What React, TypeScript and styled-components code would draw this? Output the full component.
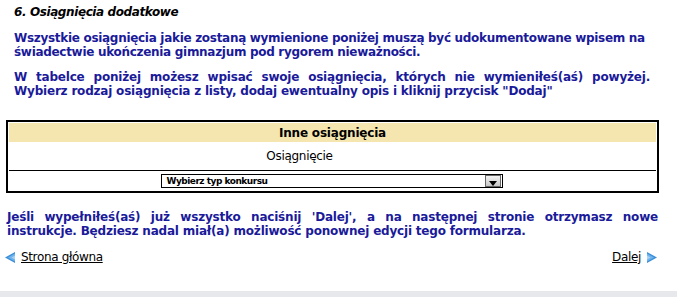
import React from 'react';
import styled, { createGlobalStyle } from 'styled-components';

const GlobalStyle = createGlobalStyle`
  html, body {
    margin: 0;
    padding: 0;
    background: #ffffff;
  }
  body {
    font-family: "DejaVu Sans", Verdana, sans-serif;
    font-size: 12px;
  }
`;

const App = () => {
  return (
    <Page>
      <GlobalStyle />
      <Intro>
        <Heading>6. Osiągnięcia dodatkowe</Heading>
        <Note>
          Wszystkie osiągnięcia jakie zostaną wymienione poniżej muszą być udokumentowane wpisem na
          świadectwie ukończenia gimnazjum pod rygorem nieważności.
        </Note>
        <Note justify>
          W tabelce poniżej możesz wpisać swoje osiągnięcia, których nie wymieniłeś(aś) powyżej.
          Wybierz rodzaj osiągnięcia z listy, dodaj ewentualny opis i kliknij przycisk "Dodaj"
        </Note>
      </Intro>

      <Box>
        <HeaderRow>Inne osiągnięcia</HeaderRow>
        <LabelRow>Osiągnięcie</LabelRow>
        <SelectRow>
          <FakeSelect>
            <SelectText>Wybierz typ konkursu</SelectText>
            <DropButton>
              <svg width="8" height="5" viewBox="0 0 8 5">
                <path d="M0 0 H8 L4 5 Z" fill="#000" />
              </svg>
            </DropButton>
          </FakeSelect>
        </SelectRow>
      </Box>

      <Outro>
        Jeśli wypełniłeś(aś) już wszystko naciśnij 'Dalej', a na następnej stronie otrzymasz nowe
        instrukcje. Będziesz nadal miał(a) możliwość ponownej edycji tego formularza.
      </Outro>

      <NavRow>
        <NavLink>
          <Arrow dir="left" />
          <LinkText>Strona główna</LinkText>
        </NavLink>
        <NavLink>
          <LinkText>Dalej</LinkText>
          <Arrow dir="right" />
        </NavLink>
      </NavRow>

      <FootStrip />
    </Page>
  );
};

interface ArrowProps {
  dir: 'left' | 'right';
}
const Arrow = (props: ArrowProps) => {
  const flip = props.dir === 'right' ? 'translate(10 0) scale(-1 1)' : undefined;
  return (
    <svg width="10" height="11" viewBox="0 0 10 11">
      <g transform={flip}>
        <path d="M10 0 L0 5.5 L10 11 Z" fill="#3d8fd8" />
        <path d="M10 1.5 L3 5.5 L10 9.5 Z" fill="#6fb3ec" />
        <path d="M10 3.5 L6.5 5.5 L10 7.5 Z" fill="#a9d3f5" />
      </g>
    </svg>
  );
};

const Page = styled.div`
  width: 677px;
  height: 297px;
  display: flex;
  flex-direction: column;
  overflow: hidden;
`;

const Intro = styled.div`
  width: 636px;
  padding: 5px 0 0 14px;
  display: flex;
  flex-direction: column;
  gap: 11px;
`;

const Heading = styled.div`
  font-weight: bold;
  font-style: italic;
  color: #000;
  line-height: 14px;
  letter-spacing: -0.4px;
  margin-bottom: 1px;
`;

const Note = styled.div<{ justify?: boolean }>`
  font-weight: bold;
  color: #1a1a9a;
  line-height: 14px;
  letter-spacing: ${(p) => (p.justify ? '-0.2px' : '-0.3px')};
  text-align: ${(p) => (p.justify ? 'justify' : 'left')};
`;

const Box = styled.div`
  margin: 22px 0 0 6px;
  width: 647px;
  border: 2px solid #000;
  padding: 1px;
  display: flex;
  flex-direction: column;
`;

const HeaderRow = styled.div`
  height: 19px;
  background: #f5e6b0;
  display: flex;
  align-items: center;
  justify-content: center;
  font-weight: bold;
  letter-spacing: -0.2px;
  color: #000;
`;

const LabelRow = styled.div`
  height: 28px;
  padding-right: 66px;
  border-bottom: 1px solid #000;
  display: flex;
  align-items: center;
  justify-content: center;
  letter-spacing: -0.3px;
  color: #000;
`;

const SelectRow = styled.div`
  height: 19px;
  display: flex;
  align-items: center;
  justify-content: center;
`;

const FakeSelect = styled.div`
  width: 340px;
  height: 12px;
  border: 1px solid #000;
  display: flex;
  align-items: center;
  justify-content: space-between;
  background: #fff;
  margin-left: -2px;
`;

const SelectText = styled.span`
  font-size: 9px;
  font-weight: bold;
  letter-spacing: -0.5px;
  padding-left: 5px;
  color: #000;
`;

const DropButton = styled.div`
  width: 14px;
  height: 10px;
  margin-right: 1px;
  border: 1px solid #666;
  background: linear-gradient(#f4f4f4, #c8c8c8);
  display: flex;
  align-items: flex-end;
  justify-content: center;
`;

const Outro = styled.div`
  margin: 17px 0 0 7px;
  width: 651px;
  font-weight: bold;
  color: #1a1a9a;
  line-height: 14px;
  letter-spacing: -0.2px;
  text-align: justify;
`;

const NavRow = styled.div`
  margin: 12px 0 0 5px;
  width: 652px;
  display: flex;
  justify-content: space-between;
  align-items: center;
`;

const NavLink = styled.a`
  display: flex;
  align-items: center;
  gap: 6px;
  color: #000;
  letter-spacing: -0.35px;
  cursor: pointer;
`;

const LinkText = styled.span`
  text-decoration: underline;
  line-height: 14px;
`;

const FootStrip = styled.div`
  margin-top: auto;
  height: 6px;
  background: #e6e8eb;
`;

export default App;
